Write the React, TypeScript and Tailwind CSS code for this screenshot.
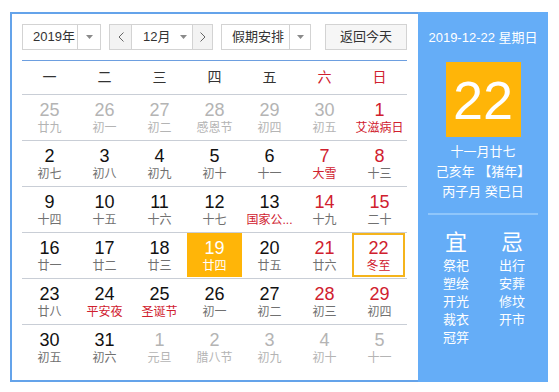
import React from "react";

type Day = {
    n: number;
    sub: string;
    tone?: "muted" | "red" | "redSub" | "redAll";
    today?: boolean;
    picked?: boolean;
};

const weeks: Day[][] = [
    [
        { n: 25, sub: "廿九", tone: "muted" },
        { n: 26, sub: "初一", tone: "muted" },
        { n: 27, sub: "初二", tone: "muted" },
        { n: 28, sub: "感恩节", tone: "muted" },
        { n: 29, sub: "初四", tone: "muted" },
        { n: 30, sub: "初五", tone: "muted" },
        { n: 1, sub: "艾滋病日", tone: "redAll" },
    ],
    [
        { n: 2, sub: "初七" },
        { n: 3, sub: "初八" },
        { n: 4, sub: "初九" },
        { n: 5, sub: "初十" },
        { n: 6, sub: "十一" },
        { n: 7, sub: "大雪", tone: "redAll" },
        { n: 8, sub: "十三", tone: "red" },
    ],
    [
        { n: 9, sub: "十四" },
        { n: 10, sub: "十五" },
        { n: 11, sub: "十六" },
        { n: 12, sub: "十七" },
        { n: 13, sub: "国家公...", tone: "redSub" },
        { n: 14, sub: "十九", tone: "red" },
        { n: 15, sub: "二十", tone: "red" },
    ],
    [
        { n: 16, sub: "廿一" },
        { n: 17, sub: "廿二" },
        { n: 18, sub: "廿三" },
        { n: 19, sub: "廿四", today: true },
        { n: 20, sub: "廿五" },
        { n: 21, sub: "廿六", tone: "red" },
        { n: 22, sub: "冬至", tone: "redAll", picked: true },
    ],
    [
        { n: 23, sub: "廿八" },
        { n: 24, sub: "平安夜", tone: "redSub" },
        { n: 25, sub: "圣诞节", tone: "redSub" },
        { n: 26, sub: "初一" },
        { n: 27, sub: "初二" },
        { n: 28, sub: "初三", tone: "red" },
        { n: 29, sub: "初四", tone: "red" },
    ],
    [
        { n: 30, sub: "初五" },
        { n: 31, sub: "初六" },
        { n: 1, sub: "元旦", tone: "muted" },
        { n: 2, sub: "腊八节", tone: "muted" },
        { n: 3, sub: "初九", tone: "muted" },
        { n: 4, sub: "初十", tone: "muted" },
        { n: 5, sub: "十一", tone: "muted" },
    ],
];

const weekNames = ["一", "二", "三", "四", "五", "六", "日"];

function Caret() {
    return (
        <svg width="7" height="4" viewBox="0 0 7 4">
            <path d="M0 0h7L3.5 4z" fill="#8a8a8a" />
        </svg>
    );
}

function Chevron({ dir }: { dir: "left" | "right" }) {
    return (
        <svg width="6" height="10" viewBox="0 0 6 10">
            <path
                d={dir === "left" ? "M5.5 0.5L1 5l4.5 4.5" : "M0.5 0.5L5 5 0.5 9.5"}
                fill="none"
                stroke="#666"
                strokeWidth="1"
            />
        </svg>
    );
}

function DayCell({ d }: { d: Day }) {
    let numColor = "text-[#111]";
    let subColor = "text-[#707070]";
    if (d.tone === "muted") {
        numColor = "text-[#b4b4b4]";
        subColor = "text-[#b4b4b4]";
    } else if (d.tone === "red") {
        numColor = "text-[#d0202e]";
    } else if (d.tone === "redSub") {
        subColor = "text-[#d0202e]";
    } else if (d.tone === "redAll") {
        numColor = "text-[#d0202e]";
        subColor = "text-[#d0202e]";
    }
    if (d.today) {
        numColor = "text-white";
        subColor = "text-white";
    }

    return (
        <div className="flex items-stretch justify-center">
            <div
                className={
                    "flex flex-col items-center " +
                    (d.today ? "w-full bg-[#ffb508] " : "") +
                    (d.picked ? "w-[53px] border-2 border-[#f5b41c] mr-[2px] " : "w-full")
                }
            >
                <span className={"text-[18px] leading-[22px] " + (d.picked ? "pt-[2px] " : "pt-[4px] ") + numColor}>{d.n}</span>
                <span className={"text-[12px] leading-[14px] whitespace-nowrap " + subColor}>{d.sub}</span>
            </div>
        </div>
    );
}

export default function App() {
    return (
        <div
            className="w-[559px] h-[392px] bg-white pt-[12px] pl-[10px]"
            style={{ fontFamily: '"Liberation Sans", "Noto Sans CJK SC", sans-serif' }}
        >
            <div className="flex w-[538px] h-[370px]">
                {/* left: calendar grid */}
                <div className="w-[408px] border-2 border-r-0 border-[#64a3ea] pt-[10px] pl-[10px] pr-[11px]">
                    <div className="flex items-center h-[26px] text-[13px] text-[#333]">
                        <div className="flex h-full w-[79px] border border-[#d3d3d3] bg-white">
                            <div className="flex-1 flex items-center pl-[10px]">2019年</div>
                            <div className="w-[23px] border-l border-[#d3d3d3] flex items-center justify-center">
                                <Caret />
                            </div>
                        </div>
                        <div className="ml-[8px] flex h-full w-[104px] border border-[#d3d3d3]">
                            <div className="w-[22px] bg-[#f3f3f3] border-r border-[#d3d3d3] flex items-center justify-center">
                                <Chevron dir="left" />
                            </div>
                            <div className="flex-1 flex items-center pl-[11px] gap-[10px] bg-white">
                                <span>12月</span>
                                <Caret />
                            </div>
                            <div className="w-[20px] bg-[#f3f3f3] border-l border-[#d3d3d3] flex items-center justify-center">
                                <Chevron dir="right" />
                            </div>
                        </div>
                        <div className="ml-[8px] flex h-full w-[90px] border border-[#d3d3d3] bg-white">
                            <div className="flex-1 flex items-center pl-[10px]">假期安排</div>
                            <div className="w-[21px] border-l border-[#d3d3d3] flex items-center justify-center">
                                <Caret />
                            </div>
                        </div>
                        <div className="ml-[14px] flex h-full w-[82px] items-center justify-center border border-[#d3d3d3] bg-[#f6f6f6]">
                            返回今天
                        </div>
                    </div>

                    <div className="mt-[10px] grid grid-cols-7 h-[34px] border-t border-[#6d9fe0] items-center text-[14px]">
                        {weekNames.map((w, i) => (
                            <div key={w} className={"text-center " + (i >= 5 ? "text-[#d0202e]" : "text-[#333]")}>
                                {w}
                            </div>
                        ))}
                    </div>

                    {weeks.map((row, ri) => (
                        <div key={ri} className="grid grid-cols-7 h-[46px] border-t border-[#c9ced6] pb-[1px]">
                            {row.map((d, ci) => (
                                <DayCell key={ci} d={d} />
                            ))}
                        </div>
                    ))}
                </div>

                {/* right: today panel */}
                <div className="w-[130px] bg-[#65adf7] flex flex-col items-center text-white">
                    <div className="pt-[16px] text-[13px] leading-[20px]">2019-12-22 星期日</div>
                    <div className="mt-[14px] w-[75px] h-[75px] bg-[#ffb508] flex items-center justify-center text-[54px] leading-none">
                        22
                    </div>
                    <div className="mt-[5px] text-[13px] leading-[20px] text-center">
                        <div>十一月廿七</div>
                        <div>己亥年 【猪年】</div>
                        <div>丙子月 癸巳日</div>
                    </div>
                    <div className="mt-[11px] w-[110px] h-[2px] bg-[#8fc6fb]" />
                    <div className="mt-[14px] ml-[2px] flex gap-[14px]">
                        <div className="w-[42px] flex flex-col items-center">
                            <div className="text-[22px] leading-[28px]">宜</div>
                            <div className="text-[13px] leading-[18px] flex flex-col items-center">
                                <span>祭祀</span>
                                <span>塑绘</span>
                                <span>开光</span>
                                <span>裁衣</span>
                                <span>冠笄</span>
                            </div>
                        </div>
                        <div className="w-[42px] flex flex-col items-center">
                            <div className="text-[22px] leading-[28px]">忌</div>
                            <div className="text-[13px] leading-[18px] flex flex-col items-center">
                                <span>出行</span>
                                <span>安葬</span>
                                <span>修坟</span>
                                <span>开市</span>
                            </div>
                        </div>
                    </div>
                </div>
            </div>
        </div>
    );
}
